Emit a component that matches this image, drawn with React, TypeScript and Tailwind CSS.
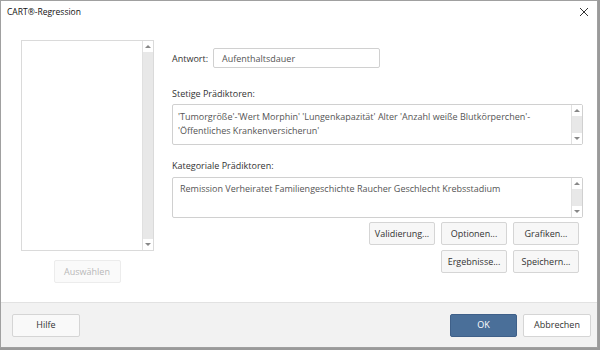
import React from "react";

const font = { fontFamily: '"Open Sans", "Noto Sans", sans-serif' };

function ScrollBar() {
  return (
    <div className="flex flex-col w-[11px] bg-[#e8e8e8] border-l border-[#e0e0e0]">
      <div className="h-[11px] bg-white flex items-center justify-center">
        <div className="w-0 h-0 border-l-[3px] border-r-[3px] border-b-[3px] border-l-transparent border-r-transparent border-b-[#888]" />
      </div>
      <div className="flex-1" />
      <div className="h-[11px] bg-white flex items-center justify-center">
        <div className="w-0 h-0 border-l-[3px] border-r-[3px] border-t-[3px] border-l-transparent border-r-transparent border-t-[#888]" />
      </div>
    </div>
  );
}

function Btn({ children, className = "" }: { children: React.ReactNode; className?: string }) {
  return (
    <div
      className={`w-[66px] h-[23px] flex items-center justify-center rounded-[2px] border border-[#d5d5d5] bg-[#f7f7f7] text-[9px] text-[#333] ${className}`}
    >
      {children}
    </div>
  );
}

export default function App() {
  return (
    <div className="w-[600px] h-[350px] bg-[#9a9a9a] overflow-hidden" style={font}>
      <div className="w-[598px] h-[348px] bg-white border border-[#a0a0a0] flex flex-col">
        <div className="h-[22px] flex items-center justify-between pl-[6px] pr-[8px]">
          <span className="text-[8.5px] text-[#111]">CART®-Regression</span>
          <svg width="10" height="10" viewBox="0 0 10 10">
            <path d="M1 1 L9 9 M9 1 L1 9" stroke="#333" strokeWidth="1" />
          </svg>
        </div>
        <div className="flex-1 flex pt-[17px]">
          <div className="w-[171px] flex flex-col items-center pl-[19px] pr-[18px]">
            <div className="w-[133px] h-[211px] border border-[#dadada] flex justify-end">
              <ScrollBar />
            </div>
            <div className="mt-[9px] w-[67px] h-[23px] flex items-center justify-center rounded-[2px] border border-[#ececec] bg-[#fafafa] text-[9px] text-[#b8b8b8]">
              Auswählen
            </div>
          </div>
          <div className="flex-1 pr-[14px] flex flex-col text-[9px] leading-[15px] text-[#333]">
            <div className="flex items-center mt-[8px]">
              <span className="w-[41px]">Antwort:</span>
              <div className="w-[167px] h-[20px] border border-[#d0d0d0] rounded-[2px] flex items-center pl-[8px] text-[#555]">
                Aufenthaltsdauer
              </div>
            </div>
            <div className="mt-[18px]">Stetige Prädiktoren:</div>
            <div className="mt-[3px] h-[41px] border border-[#d0d0d0] rounded-[2px] flex">
              <div className="flex-1 pl-[5px] pt-[5px] leading-[14px] text-[#555]">
                'Tumorgröße'-'Wert Morphin' 'Lungenkapazität' Alter 'Anzahl weiße Blutkörperchen'-
                <br />
                'Öffentliches Krankenversicherun'
              </div>
              <ScrollBar />
            </div>
            <div className="mt-[13px]">Kategoriale Prädiktoren:</div>
            <div className="mt-[4px] h-[41px] border border-[#d0d0d0] rounded-[2px] flex">
              <div className="flex-1 pl-[7px] pt-[4px] leading-[14px] text-[#555]">
                Remission Verheiratet Familiengeschichte Raucher Geschlecht Krebsstadium
              </div>
              <ScrollBar />
            </div>
            <div className="flex justify-end gap-[6px] mt-[4px] pr-[4px]">
              <Btn>Validierung...</Btn>
              <Btn>Optionen...</Btn>
              <Btn>Grafiken...</Btn>
            </div>
            <div className="flex justify-end gap-[6px] mt-[5px] pr-[4px]">
              <Btn>Ergebnisse...</Btn>
              <Btn>Speichern...</Btn>
            </div>
          </div>
        </div>
        <div className="h-[45px] bg-[#f2f2f2] border-t border-[#e2e2e2] flex items-center justify-between pl-[11px] pr-[6px]">
          <Btn className="w-[68px] bg-[#f9f9f9]">Hilfe</Btn>
          <div className="flex gap-[6px]">
            <div className="w-[67px] h-[23px] flex items-center justify-center rounded-[2px] bg-[#4a6f99] border border-[#3f6089] text-[9px] text-white">
              OK
            </div>
            <Btn className="w-[68px] bg-white">Abbrechen</Btn>
          </div>
        </div>
      </div>
    </div>
  );
}
